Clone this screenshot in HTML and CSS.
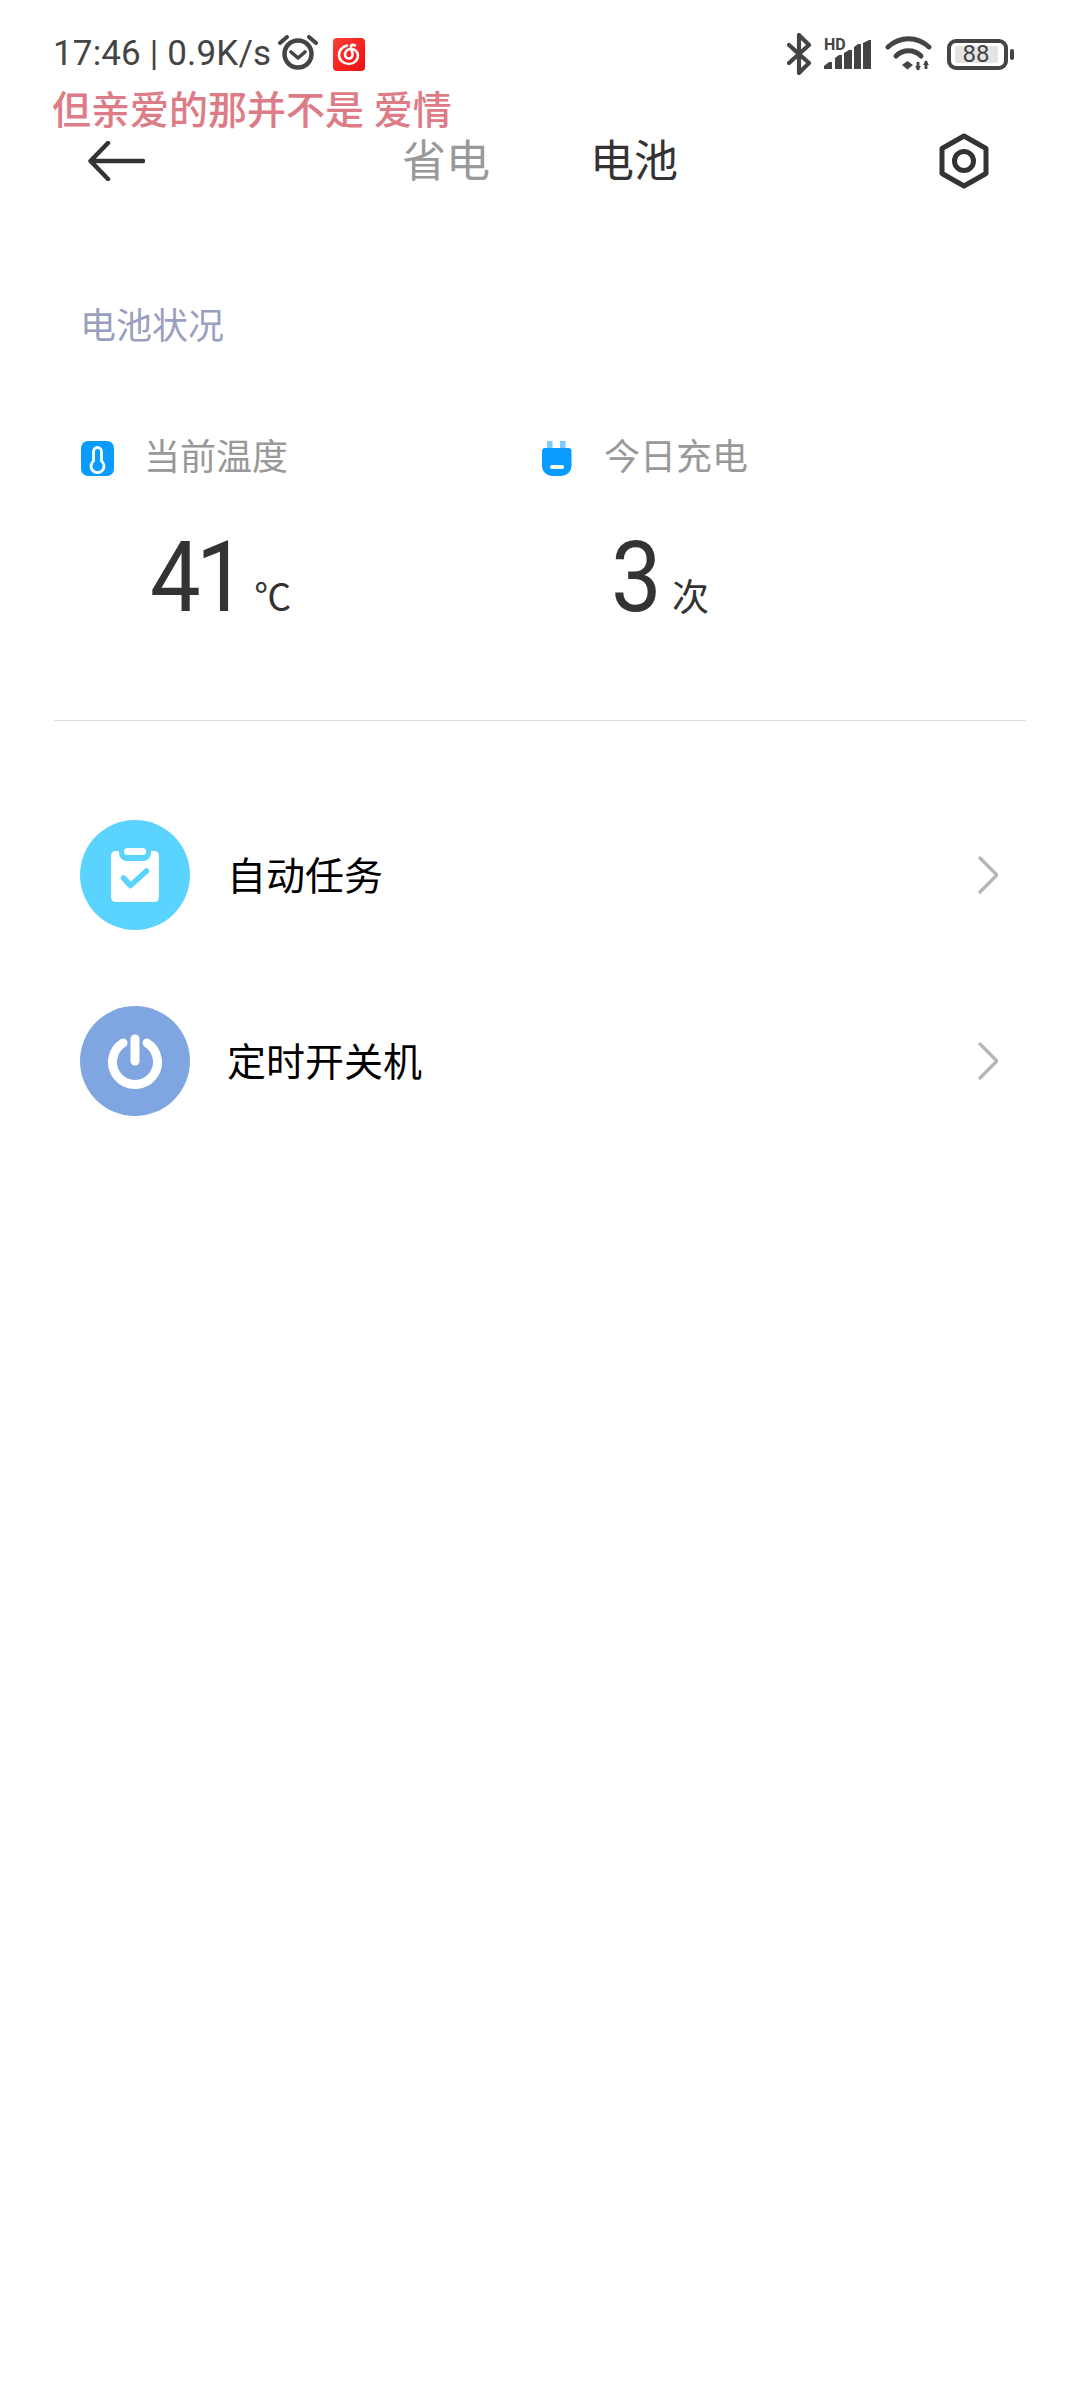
FILE: index.html
```html
<!DOCTYPE html>
<html lang="zh-CN">
<head>
    <meta charset="UTF-8">
    <meta name="viewport" content="width=device-width, initial-scale=1.0">
    <title>电池</title>
    <link rel="stylesheet" href="styles.css">
</head>
<body>
    <!-- status bar -->
    <div class="status">
        <span class="status-text">17:46 | 0.9K/s</span>
        <svg class="alarm" width="40" height="38" viewBox="0 0 40 38" fill="none" stroke="#444">
            <circle cx="20" cy="19" r="13.500" stroke-width="4.500"/>
            <path d="M13 17l7 6 7-6" stroke-width="3.600" stroke-linecap="round" stroke-linejoin="round"/>
            <path d="M2 8l7-6M38 8l-7-6" stroke-width="4" stroke-linecap="round"/>
        </svg>
        <svg class="netease" width="32" height="33" viewBox="0 0 32 33">
            <defs>
                <linearGradient id="netease-red" x1="0" y1="0" x2="1" y2="1">
                    <stop offset="0" stop-color="#ff3c38"/>
                    <stop offset="1" stop-color="#ee0f0f"/>
                </linearGradient>
            </defs>
            <rect width="32" height="33" rx="4" fill="url(#netease-red)"/>
            <path d="M14 7.500c-5 1.500-8 5-8 9.500 0 5 4.500 9 10 9s9-4 9-8.500c0-4-3.500-6.500-7-6.500s-6 2.500-6 5.500c0 2.500 2 4 4 4s4-2 3.500-5l-1.500-6c-.5-2 1-3.500 4-2" fill="none" stroke="#fff" stroke-width="2.600" stroke-linecap="round"/>
        </svg>
        <div class="status-right">
            <svg width="25" height="42" viewBox="0 0 25 42" fill="none" stroke="#444" stroke-width="4.200" stroke-linecap="round" stroke-linejoin="round">
                <path d="M2 12l20 18-10 10V2l10 10-20 18"/>
            </svg>
            <div class="signal">
                <span class="hd">HD</span>
                <svg width="49" height="30" viewBox="0 0 49 30" fill="#444">
                    <path d="M1 29v-3l5-4h3v7zM12 29V18l4-3h3v14zM21 29V13l5-3h3v19zM31 29V7l4-3h3v25zM40 29V3l6-3h2v29z"/>
                </svg>
            </div>
            <svg class="wifi" width="47" height="36" viewBox="0 0 47 36" fill="none" stroke="#444" stroke-width="5" stroke-linecap="round">
                <path d="M3 11C15 0 32 0 44 11"/>
                <path d="M11 20c7-7 18-7 25 0"/>
                <path d="M17 29l5.500-4 5.500 4-5.500 4.500z" fill="#444" stroke="none"/>
                <path d="M33 26v8M41 25v8" stroke-width="2.800" stroke-linecap="butt"/>
                <path d="M30 30l3 4.500 3-4.500zM38 29l3-4.500 3 4.500z" fill="#444" stroke="none"/>
            </svg>
            <div class="battery">
                <div class="battery-body"><span class="battery-level">88</span></div>
                <span class="battery-nub"></span>
            </div>
        </div>
    </div>

    <div class="lyric">但亲爱的那并不是 爱情</div>

    <!-- header -->
    <div class="header">
        <svg class="back" width="57" height="40" viewBox="0 0 57 40" fill="none" stroke="#333" stroke-width="4.500" stroke-linecap="round" stroke-linejoin="round">
            <path d="M55 20H3M20 2L2.500 20 20 38"/>
        </svg>
        <div class="tabs">
            <span class="tab">省电</span>
            <span class="tab tab-active">电池</span>
        </div>
        <svg class="settings" width="50" height="56" viewBox="0 0 50 56" fill="none" stroke="#333" stroke-width="5" stroke-linejoin="round">
            <path d="M25 3l22 12.500v25L25 53 3 40.500v-25z"/>
            <circle cx="25" cy="28" r="9.500"/>
        </svg>
    </div>

    <h2 class="section-title">电池状况</h2>

    <div class="stats">
        <div class="stat">
            <div class="stat-head">
                <svg width="33" height="35" viewBox="0 0 33 35">
                    <rect width="33" height="35" rx="7" fill="#0a9bff"/>
                    <path d="M16.500 6.500a4 4 0 0 1 4 4v9.500a6.500 6.500 0 1 1-8 0v-9.500a4 4 0 0 1 4-4z" fill="none" stroke="#fff" stroke-width="2.800"/>
                </svg>
                <span class="stat-label">当前温度</span>
            </div>
            <div class="stat-value"><span class="num">41</span><span class="unit unit-temp">℃</span></div>
        </div>
        <div class="stat">
            <div class="stat-head">
                <svg width="30" height="35" viewBox="0 0 30 35">
                    <path d="M5 0h5.500v9H5zM18 0h5.500v9H18z" fill="#7cc8ff"/>
                    <path d="M3 7h23.500q3 0 3 3v15a10 10 0 0 1-10 10H10A10 10 0 0 1 0 25V10q0-3 3-3z" fill="#0a9bff"/>
                    <rect x="8" y="24" width="14" height="4" rx="2" fill="#fff"/>
                </svg>
                <span class="stat-label">今日充电</span>
            </div>
            <div class="stat-value"><span class="num">3</span><span class="unit">次</span></div>
        </div>
    </div>

    <div class="divider"></div>

    <!-- list -->
    <div class="list">
        <div class="row">
            <span class="circle circle-task">
                <svg width="48" height="54" viewBox="0 0 48 54">
                    <path d="M5 3h2.500q.5 0 .5 1c0 5 3 9 8 9h16c5 0 8-4 8-9q0-1 .5-1H43q5 0 5 5v41q0 5-5 5H5q-5 0-5-5V8q0-5 5-5z" fill="#fff"/>
                    <rect x="13" y="0" width="22" height="7" rx="3.500" fill="#fff"/>
                    <path d="M12.500 30l7 7.500L35.500 23" fill="none" stroke="#5ad4ff" stroke-width="5.500" stroke-linecap="round" stroke-linejoin="round"/>
                </svg>
            </span>
            <span class="row-label">自动任务</span>
            <svg class="chevron" width="20" height="38" viewBox="0 0 20 38" fill="none" stroke="#b5b5b5" stroke-width="3.200" stroke-linecap="round" stroke-linejoin="round">
                <path d="M2 2l17 17L2 36"/>
            </svg>
        </div>
        <div class="row">
            <span class="circle circle-power">
                <svg width="56" height="56" viewBox="0 0 56 56" fill="none" stroke="#fff" stroke-width="9" stroke-linecap="round">
                    <path d="M16 10A22.500 22.500 0 1 0 40 10"/>
                    <path d="M28 6v22"/>
                </svg>
            </span>
            <span class="row-label">定时开关机</span>
            <svg class="chevron" width="20" height="38" viewBox="0 0 20 38" fill="none" stroke="#b5b5b5" stroke-width="3.200" stroke-linecap="round" stroke-linejoin="round">
                <path d="M2 2l17 17L2 36"/>
            </svg>
        </div>
    </div>
</body>
</html>
```

FILE: styles.css
```css
body {
    margin: 0;
    width: 1080px;
    height: 2400px;
    background-color: #fff;
    font-family: "Roboto", "Noto Sans CJK SC", sans-serif;
    overflow: hidden;
}

/* status bar */
.status {
    display: flex;
    align-items: center;
    height: 44px;
    padding: 32px 66px 0 53px;
    color: #444;
}

.status-text {
    font-size: 35px;
    line-height: 44px;
    letter-spacing: 0.15px;
    width: 225px;
    white-space: nowrap;
}

.netease {
    margin-left: 15px;
}

.status-right {
    display: flex;
    align-items: center;
    margin-left: auto;
}

.signal {
    display: flex;
    align-items: flex-end;
    height: 31px;
    margin-left: 11px;
    position: relative;
}

.hd {
    position: absolute;
    left: 1px;
    top: -3px;
    font-size: 16px;
    line-height: 18px;
    font-weight: 700;
}

.wifi {
    margin-left: 13px;
}

.battery {
    display: flex;
    align-items: center;
    margin-left: 15px;
}

.battery-body {
    display: flex;
    align-items: center;
    justify-content: center;
    box-sizing: border-box;
    width: 61px;
    height: 31px;
    border: 4px solid #444;
    border-radius: 9px;
}

.battery-level {
    width: 43px;
    height: 17px;
    margin-left: -3px;
    background-color: #e4e4e4;
    border-radius: 2px;
    font-size: 24px;
    line-height: 17px;
    text-align: center;
}

.battery-nub {
    width: 4px;
    height: 11px;
    margin-left: 2px;
    background-color: #444;
    border-radius: 2px;
}

.lyric {
    height: 40px;
    margin-top: 15px;
    padding-left: 52px;
    color: #dd7b87;
    font-size: 39px;
    line-height: 40px;
    font-weight: 500;
    white-space: pre;
}

/* header */
.header {
    display: flex;
    align-items: center;
    height: 60px;
    padding: 0 91px 0 88px;
}

.tabs {
    display: flex;
    gap: 100px;
    margin-left: 257px;
    padding-top: 2px;
}

.tab {
    color: #999;
    font-size: 44px;
    line-height: 60px;
}

.tab-active {
    color: #333;
}

.settings {
    margin-left: auto;
}

.section-title {
    margin: 116px 0 0 80px;
    color: #999fbe;
    font-size: 36px;
    line-height: 40px;
    font-weight: 400;
}

/* stats */
.stats {
    display: grid;
    grid-template-columns: 461px 1fr;
    margin: 93px 0 0 81px;
}

.stat-head {
    display: flex;
    align-items: center;
    gap: 30px;
    height: 36px;
}

.stat:last-child .stat-head {
    gap: 32px;
}

.stat-label {
    color: #999;
    font-size: 36px;
    line-height: 36px;
}

.stat-value {
    display: flex;
    align-items: baseline;
    height: 76px;
    margin-top: 64px;
    padding-left: 69px;
    color: #333;
}

.num {
    font-size: 98px;
    line-height: 76px;
    letter-spacing: -5px;
    transform: scaleX(0.92);
    transform-origin: left;
}

.unit {
    margin-left: 11px;
    font-size: 37px;
    line-height: 40px;
}

.unit-temp {
    margin-left: 4px;
}

.divider {
    height: 1px;
    margin: 104px 54px 0;
    background-color: #ddd;
}

/* list */
.list {
    display: flex;
    flex-direction: column;
    gap: 76px;
    margin-top: 99px;
    padding: 0 82px 0 80px;
}

.row {
    display: flex;
    align-items: center;
    height: 110px;
}

.circle {
    display: flex;
    align-items: center;
    justify-content: center;
    width: 110px;
    height: 110px;
    border-radius: 50%;
}

.circle-task {
    background-color: #5ad4ff;
}

.circle-power {
    background-color: #7fa6e0;
}

.row-label {
    margin-left: 37px;
    padding-bottom: 5px;
    color: #000;
    font-size: 39px;
}

.chevron {
    margin-left: auto;
}
```
